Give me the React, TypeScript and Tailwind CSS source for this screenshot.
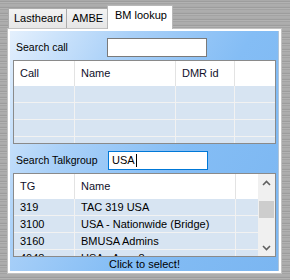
import React from 'react';

const font = { fontFamily: '"Liberation Sans", Arial, sans-serif' };

interface Col {
  label: string;
  width: string;
}

const callCols: Col[] = [
  { label: 'Call', width: 'w-[61px]' },
  { label: 'Name', width: 'w-[101px]' },
  { label: 'DMR id', width: 'w-[59px]' },
  { label: '', width: 'flex-1' },
];

const tgCols: Col[] = [
  { label: 'TG', width: 'w-[61px]' },
  { label: 'Name', width: 'w-[161px]' },
  { label: '', width: 'flex-1' },
];

const talkgroups = [
  ['319', 'TAC 319 USA'],
  ['3100', 'USA - Nationwide (Bridge)'],
  ['3160', 'BMUSA Admins'],
  ['4048', 'USA - Area 8'],
];

const HeaderRow: React.FC<{ cols: Col[] }> = ({ cols }) => (
  <div className="flex h-[25px] bg-white shrink-0">
    {cols.map((c, i) => (
      <div
        key={i}
        className={`${c.width} h-full flex items-center pl-[6px] text-[#10102a] ${i < cols.length - 1 ? 'border-r border-[#e3e3e3]' : ''}`}
      >
        {c.label}
      </div>
    ))}
  </div>
);

const BodyRow: React.FC<{ cols: Col[]; values: string[] }> = ({ cols, values }) => (
  <div className="flex h-[17px] shrink-0 bg-[#d7e4f2] border-b border-[#f2f2f2]">
    {cols.map((c, i) => (
      <div
        key={i}
        className={`${c.width} h-full flex items-center pl-[6px] text-black whitespace-nowrap overflow-hidden ${i < cols.length - 1 ? 'border-r border-[#f2f2f2]' : ''}`}
      >
        {values[i] ?? ''}
      </div>
    ))}
  </div>
);

const Tab: React.FC<{ label: string; active?: boolean; w: string }> = ({ label, active, w }) =>
  active ? (
    <div className={`${w} h-[24px] -mb-px bg-white border border-b-0 border-[#b8b8b8] flex items-start pt-[4px] pl-[7px] relative z-10`}>
      {label}
    </div>
  ) : (
    <div className={`${w} h-[20px] bg-gradient-to-b from-[#f3f3f3] to-[#e6e6e6] border border-b-0 border-[#acacac] -mr-px flex items-center pl-[5px]`}>
      {label}
    </div>
  );

export default function App() {
  return (
    <div
      style={font}
      className="w-[290px] h-[280px] overflow-hidden text-[11px] leading-none bg-[repeating-linear-gradient(180deg,#aaaaaa_0px,#aaaaaa_1px,#9d9d9d_1px,#9d9d9d_2px,#b2b2b2_2px,#b2b2b2_3px,#a3a3a3_3px,#a3a3a3_4px,#adadad_4px,#adadad_6px)]"
    >
      <div className="flex items-end h-[23px] mt-[5px] pl-[8px]">
        <Tab label="Lastheard" w="w-[59px]" />
        <Tab label="AMBE" w="w-[42px]" />
        <Tab label="BM lookup" w="w-[66px]" active />
      </div>

      <div className="ml-[7px] w-[275px] h-[246px] border border-[#c2c2c2] bg-white p-[2px]">
        <div className="w-full h-full border-r border-[#b0c4d8] bg-[linear-gradient(120deg,#e4f0fd_0%,#a9d0f8_30%,#84bdf5_60%,#7bb6f1_100%)] flex flex-col pl-[3px] pr-[2px]">
          <div className="flex items-center h-[19px] mt-[7px] shrink-0 text-[10.5px]">
            <span className="pl-[3px] w-[94px] text-black">Search call</span>
            <div className="w-[100px] h-[19px] bg-white border border-[#7a7a7a]" />
          </div>

          <div className="mt-[3px] h-[84px] border border-[#8a8a8a] bg-[#d7e4f2] flex flex-col overflow-hidden shrink-0">
            <HeaderRow cols={callCols} />
            {[0, 1, 2, 3].map((r) => (
              <BodyRow key={r} cols={callCols} values={[]} />
            ))}
          </div>

          <div className="flex items-center h-[19px] mt-[7px] shrink-0 text-[10.5px]">
            <span className="pl-[3px] w-[95px] text-black">Search Talkgroup</span>
            <div className="w-[100px] h-[19px] bg-white border border-[#0078d7] flex items-center pl-[3px] text-black text-[11px]">
              USA<span className="inline-block w-px h-[13px] bg-black ml-px" />
            </div>
          </div>

          <div className="mt-[3px] h-[84px] border border-[#8a8a8a] bg-[#d7e4f2] flex overflow-hidden shrink-0">
            <div className="flex-1 flex flex-col overflow-hidden">
              <HeaderRow cols={tgCols} />
              {talkgroups.map((t, r) => (
                <BodyRow key={r} cols={tgCols} values={t} />
              ))}
            </div>
            <div className="w-[17px] h-full bg-[#f0f0f0] flex flex-col items-center shrink-0">
              <div className="h-[17px] w-full flex items-center justify-center">
                <svg width="9" height="6" viewBox="0 0 9 6">
                  <path d="M1 5 L4.5 1.5 L8 5" fill="none" stroke="#606060" strokeWidth="1.6" />
                </svg>
              </div>
              <div className="w-[15px] h-[17px] mt-[10px] bg-[#cdcdcd]" />
              <div className="flex-1" />
              <div className="h-[17px] w-full flex items-center justify-center">
                <svg width="9" height="6" viewBox="0 0 9 6">
                  <path d="M1 1 L4.5 4.5 L8 1" fill="none" stroke="#606060" strokeWidth="1.6" />
                </svg>
              </div>
            </div>
          </div>

          <div className="flex-1 flex items-center justify-center text-black">Click to select!</div>
        </div>
      </div>
    </div>
  );
}
